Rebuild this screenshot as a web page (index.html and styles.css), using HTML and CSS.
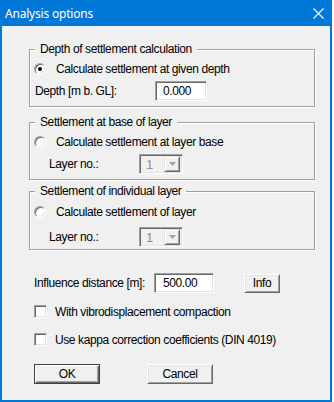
FILE: index.html
```html
<!DOCTYPE html>
<html>
<head>
<meta charset="utf-8">
<link rel="stylesheet" href="styles.css">
</head>
<body>
<div class="window">
  <div class="titlebar">
    <span class="title">Analysis options</span>
    <svg class="close" width="11" height="11" viewBox="0 0 11 11"><path d="M0.5 0.5 L10.5 10.5 M10.5 0.5 L0.5 10.5" stroke="#fff" stroke-width="1.1" fill="none"/></svg>
  </div>
  <div class="client">
    <div class="group g1">
      <div class="legend">Depth of settlement calculation</div>
      <div class="radio-row r-a"><span class="radio checked"></span><span>Calculate settlement at given depth</span></div>
      <div class="field-row f-depth"><span class="lbl lbl-depth">Depth [m b. GL]:</span><span class="edit edit-depth">0.000</span></div>
    </div>
    <div class="group g2">
      <div class="legend">Settlement at base of layer</div>
      <div class="radio-row r-a"><span class="radio"></span><span>Calculate settlement at layer base</span></div>
      <div class="field-row f-layer r-b"><span class="lbl lbl-layer">Layer no.:</span><span class="combo"><span class="combo-val">1</span><span class="combo-btn"><svg width="7" height="4" viewBox="0 0 7 4"><path d="M0 0 H7 L3.5 4 Z" fill="#a0a0a0"/></svg></span></span></div>
    </div>
    <div class="group g3">
      <div class="legend">Settlement of individual layer</div>
      <div class="radio-row r-c"><span class="radio"></span><span>Calculate settlement of layer</span></div>
      <div class="field-row f-layer r-d"><span class="lbl lbl-layer">Layer no.:</span><span class="combo"><span class="combo-val">1</span><span class="combo-btn"><svg width="7" height="4" viewBox="0 0 7 4"><path d="M0 0 H7 L3.5 4 Z" fill="#a0a0a0"/></svg></span></span></div>
    </div>
    <div class="field-row f-infl"><span class="lbl lbl-infl">Influence distance [m]:</span><span class="edit edit-infl">500.00</span><span class="btn btn-info">Info</span></div>
    <div class="check-row c1"><span class="checkbox"></span><span>With vibrodisplacement compaction</span></div>
    <div class="check-row c2"><span class="checkbox"></span><span>Use kappa correction coefficients (DIN 4019)</span></div>
    <div class="btn-row"><span class="btn btn-default">OK</span><span class="btn btn-cancel">Cancel</span></div>
  </div>
</div>
</body>
</html>
```

FILE: styles.css
```css
* { box-sizing: border-box; }
html, body { margin: 0; padding: 0; background: #ffffff; }
body {
  font-family: "Liberation Sans", Arial, sans-serif;
  font-size: 12px;
  letter-spacing: -0.4px;
  color: #000;
}
.window {
  width: 332px;
  height: 402px;
  display: flex;
  flex-direction: column;
}
.titlebar {
  height: 26px;
  flex: none;
  background: #0078d7;
  color: #fff;
  display: flex;
  align-items: center;
  justify-content: space-between;
  padding: 0 8px 0 5px;
}
.title {
  font-family: "Noto Sans", sans-serif;
  font-size: 12px;
  letter-spacing: -0.2px;
}
.close { display: block; }
.client {
  flex: 1;
  background: #f0f0f0;
  border: 2px solid #0078d7;
  border-top: 0;
  padding: 23px 0 0 27px;
  display: flex;
  flex-direction: column;
  align-items: flex-start;
}
.group {
  width: 286px;
  border: 1px solid #a0a0a0;
  box-shadow: 1px 1px 0 #fff, inset 1px 1px 0 #fff;
  padding: 0 0 5px 0;
}
.g2 { margin-top: 15px; }
.g3 { margin-top: 11px; padding-bottom: 2px; }
.legend {
  margin: -8px 0 0 5px;
  padding: 0 5px;
  background: #f0f0f0;
  line-height: 15px;
  height: 15px;
  width: fit-content;
}
.radio-row {
  display: flex;
  align-items: center;
  height: 16px;
  margin: 4px 0 0 4px;
}
.r-c { margin-top: 5px; }
.radio {
  width: 12px;
  height: 12px;
  border-radius: 50%;
  background: #fff;
  border: 1px solid;
  border-color: #a0a0a0 #fff #fff #a0a0a0;
  box-shadow: inset 1px 1px 0 #696969, inset -1px -1px 0 #e3e3e3;
  margin-right: 10px;
  position: relative;
  flex: none;
}
.radio.checked::after {
  content: "";
  position: absolute;
  left: 3px;
  top: 3px;
  width: 4px;
  height: 4px;
  border-radius: 50%;
  background: #000;
}
.field-row {
  display: flex;
  align-items: center;
  height: 20px;
  margin: 4px 0 0 5px;
}
.f-layer { margin-left: 19px; }
.r-d { margin-top: 7px; }
.lbl { flex: none; }
.lbl-depth { width: 120px; }
.lbl-layer { width: 90px; }
.lbl-infl { width: 120px; }
.edit {
  height: 20px;
  background: #fff;
  border: 1px solid;
  border-color: #a0a0a0 #fff #fff #a0a0a0;
  box-shadow: inset 1px 1px 0 #696969, inset -1px -1px 0 #e3e3e3;
  padding-left: 7px;
  line-height: 18px;
}
.edit-depth { width: 52px; }
.edit-infl { width: 60px; padding-left: 8px; }
.combo {
  width: 44px;
  height: 20px;
  background: #f0f0f0;
  border: 1px solid;
  border-color: #a0a0a0 #fff #fff #a0a0a0;
  box-shadow: inset 1px 1px 0 #696969, inset -1px -1px 0 #e3e3e3;
  display: flex;
  align-items: center;
  justify-content: space-between;
  padding: 2px 2px 2px 6px;
}
.combo-val { color: #8f8f8f; font-size: 13px; }
.combo-btn {
  width: 16px;
  height: 16px;
  background: #f0f0f0;
  border: 1px solid;
  border-color: #e3e3e3 #696969 #696969 #e3e3e3;
  box-shadow: inset 1px 1px 0 #fff, inset -1px -1px 0 #a0a0a0;
  display: flex;
  align-items: center;
  justify-content: center;
}
.combo-btn svg { display: block; }
.f-infl { margin: 23px 0 0 5px; }
.btn {
  display: flex;
  align-items: center;
  justify-content: center;
  height: 20px;
  background: #f0f0f0;
  border: 1px solid;
  border-color: #fff #696969 #696969 #fff;
  box-shadow: inset 1px 1px 0 #e3e3e3, inset -1px -1px 0 #a0a0a0;
  flex: none;
}
.btn-info { width: 36px; margin-left: 30px; height: 19px; }
.check-row {
  display: flex;
  align-items: center;
  height: 13px;
  margin: 12px 0 0 5px;
}
.c2 { margin-top: 15px; }
.checkbox {
  width: 13px;
  height: 13px;
  background: #fff;
  border: 1px solid;
  border-color: #a0a0a0 #fff #fff #a0a0a0;
  box-shadow: inset 1px 1px 0 #696969, inset -1px -1px 0 #e3e3e3;
  margin-right: 8px;
  flex: none;
}
.btn-row {
  display: flex;
  margin: 18px 0 0 5px;
}
.btn-default {
  width: 66px;
  border: 1px solid #404040;
  box-shadow: inset 1px 1px 0 #fff, inset -1px -1px 0 #696969, inset -2px -2px 0 #a0a0a0;
}
.btn-cancel { width: 66px; margin-left: 47px; }
```
